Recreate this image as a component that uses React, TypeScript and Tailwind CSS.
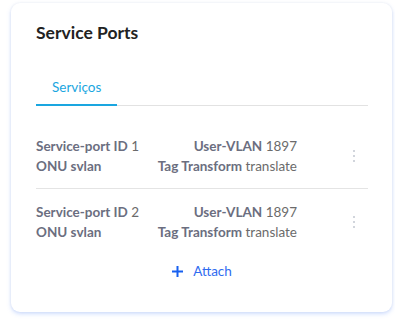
import React from 'react';

const ports = [
  { id: 1, vlan: 1897, svlan: '', transform: 'translate' },
  { id: 2, vlan: 1897, svlan: '', transform: 'translate' },
];

const Dots: React.FC = () => (
  <svg width="4" height="14" viewBox="0 0 4 14" className="text-gray-300">
    <rect x="1" y="1" width="2" height="2" fill="currentColor" />
    <rect x="1" y="6" width="2" height="2" fill="currentColor" />
    <rect x="1" y="11" width="2" height="2" fill="currentColor" />
  </svg>
);

const App: React.FC = () => {
  return (
    <div className="w-[395px] h-[332px] bg-white pt-[3px] pl-[11px]" style={{ fontFamily: 'Lato, "Noto Sans", sans-serif' }}>
      <div className="w-[381px] h-[309px] rounded-[9px] bg-white shadow-[0_2px_4px_rgba(120,160,255,0.35),0_0_3px_rgba(0,0,0,0.06)] pl-[25px] pr-[24px] pt-[18px]">
        <h2 className="text-[17.5px] font-bold text-[#222] leading-6">Service Ports</h2>

        <div className="mt-[32px] border-b border-[#e2e2e2] flex">
          <div className="px-4 pb-[7px] text-[13.5px] text-[#1aa6e0] border-b-2 border-[#1aa6e0] -mb-px w-[81px] leading-5">
            Serviços
          </div>
        </div>

        <div className="mt-[20px]">
          {ports.map((p, i) => (
            <div
              key={p.id}
              className={`flex items-center py-[10px] text-[13.5px] leading-[20px] ${i === 0 ? 'border-b border-[#e4e4e4] pb-[12px]' : 'pt-[13px]'}`}
            >
              <div className="w-[120px]">
                <div>
                  <span className="font-bold text-[#6b6e80]">Service-port ID</span>{' '}
                  <span className="text-[#6b6b6b]">{p.id}</span>
                </div>
                <div className="font-bold text-[#6b6e80]">ONU svlan</div>
              </div>
              <div className="w-[141px] text-right">
                <div>
                  <span className="font-bold text-[#6b6e80]">User-VLAN</span>{' '}
                  <span className="text-[#6b6b6b]">{p.vlan}</span>
                </div>
                <div>
                  <span className="font-bold text-[#6b6e80]">Tag Transform</span>{' '}
                  <span className="text-[#6b6b6b]">{p.transform}</span>
                </div>
              </div>
              <div className="flex-1 flex justify-end pr-[12px]">
                <Dots />
              </div>
            </div>
          ))}
        </div>

        <div className="flex justify-center mt-[9px]">
          <button className="flex items-center gap-[10px] text-[13.5px] text-[#2f6bf0] leading-5">
            <svg width="11" height="11" viewBox="0 0 11 11">
              <path d="M5.5 0v11M0 5.5h11" stroke="#1760f0" strokeWidth="2" />
            </svg>
            Attach
          </button>
        </div>
      </div>
    </div>
  );
};

export default App;
